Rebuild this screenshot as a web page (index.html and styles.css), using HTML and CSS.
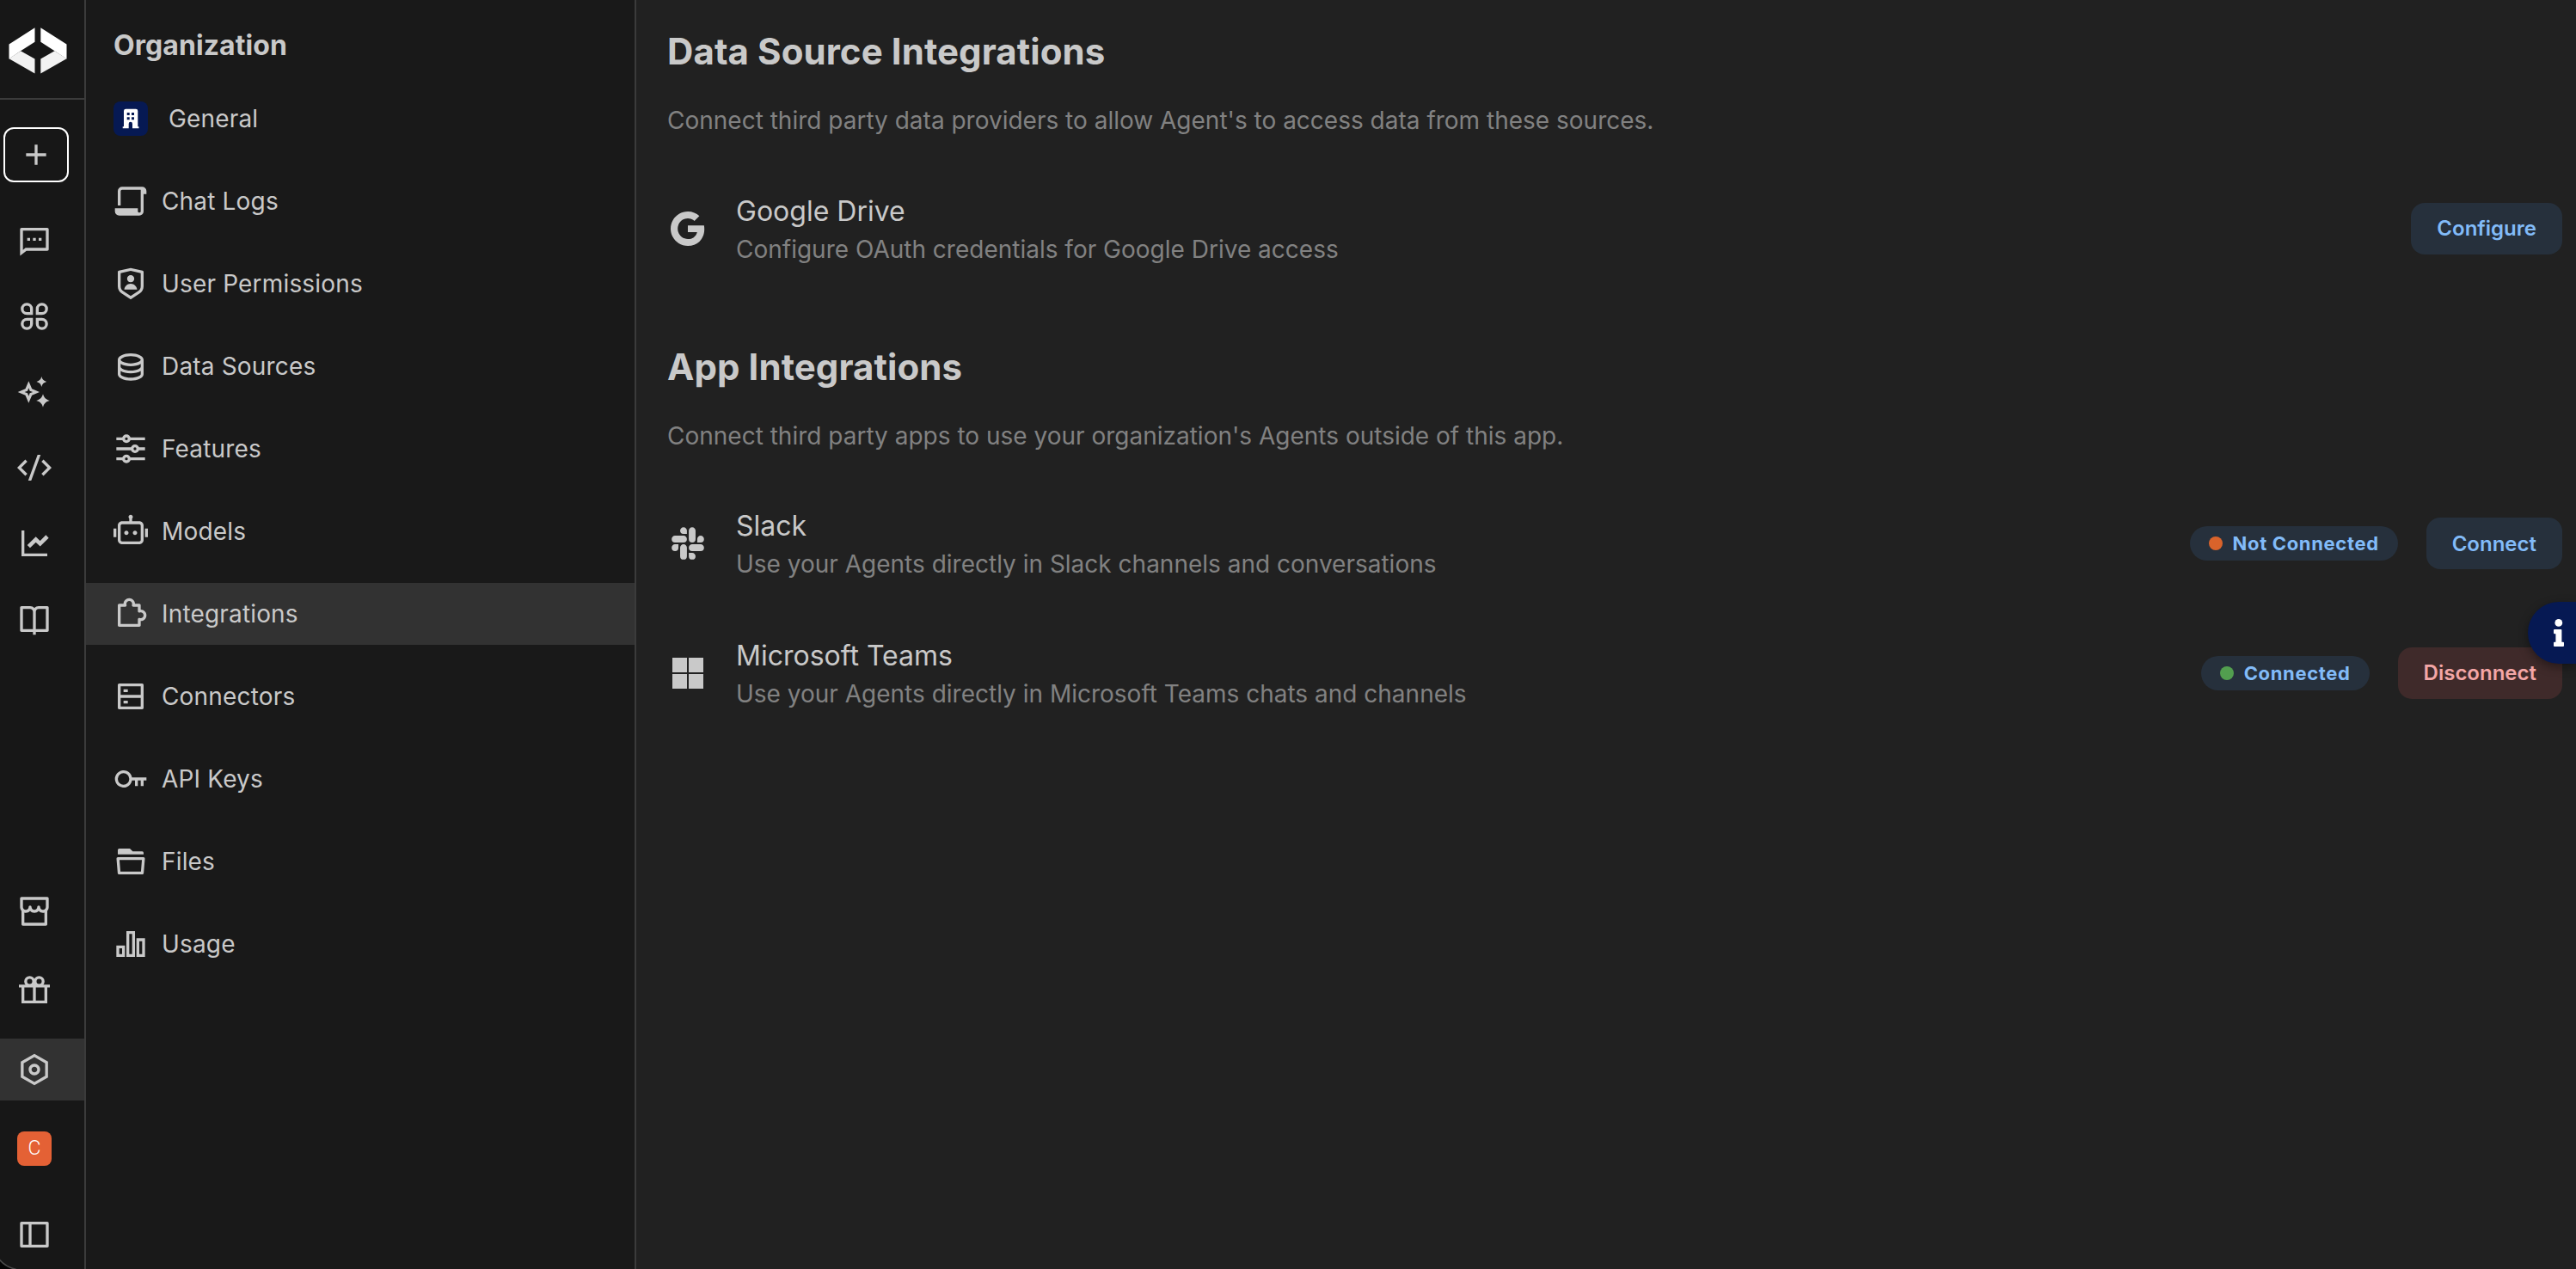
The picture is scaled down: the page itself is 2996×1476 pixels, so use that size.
FILE: index.html
```html
<!DOCTYPE html>
<html lang="en">

<head>
  <meta charset="UTF-8" />
  <meta name="viewport" content="width=device-width, initial-scale=1.0" />
  <title>Integrations</title>
  <link rel="stylesheet" href="styles.css">
</head>

<body>

  <div class="app">

    <!-- Icon rail -->
    <nav class="rail">
      <div class="rail-header">
        <svg class="logo" viewBox="0 0 68 54">
          <path fill="#fff" d="M30.5 0.3V16.8L14 27.3L0.5 36.5V19.5ZM37.3 0.3V16.8L53.5 27.3L67.5 36.5V19.5Z" />
          <path fill="#f2f2f2" d="M14 27.3L30.5 36.5V53.4L0.5 36.3ZM53.5 27.3L37.3 36.5V53.4L67.5 36.3Z" />
        </svg>
      </div>

      <button class="new-btn" aria-label="New">
        <svg viewBox="0 0 24 24"><path d="M11 11V5H13V11H19V13H13V19H11V13H5V11H11Z" /></svg>
      </button>

      <div class="rail-top">
        <a class="rail-item"><svg class="icon" viewBox="0 0 24 24"><path d="M6.45455 19L2 22.5V4C2 3.44772 2.44772 3 3 3H21C21.5523 3 22 3.44772 22 4V18C22 18.5523 21.5523 19 21 19H6.45455ZM5.76282 17H20V5H4V18.3851L5.76282 17ZM11 10H13V12H11V10ZM7 10H9V12H7V10ZM15 10H17V12H15V10Z" /></svg></a>
        <a class="rail-item"><svg class="icon" viewBox="0 0 24 24"><path fill-rule="evenodd" d="M6.75 2.5A4.25 4.25 0 0 1 11 6.75V11H6.75A4.25 4.25 0 0 1 6.75 2.5ZM9 9V6.75A2.25 2.25 0 1 0 6.75 9H9ZM6.75 13H11V17.25A4.25 4.25 0 1 1 6.75 13ZM6.75 15A2.25 2.25 0 1 0 9 17.25V15H6.75ZM17.25 2.5A4.25 4.25 0 0 1 17.25 11H13V6.75A4.25 4.25 0 0 1 17.25 2.5ZM17.25 9A2.25 2.25 0 1 0 15 6.75V9H17.25ZM13 13H17.25A4.25 4.25 0 1 1 13 17.25V13ZM15 15V17.25A2.25 2.25 0 1 0 17.25 15H15Z" /></svg></a>
        <a class="rail-item"><svg class="icon" viewBox="0 0 24 24"><path d="M17 1.2C17.5 3.2 18.4 4.2 20.5 4.8C18.4 5.4 17.5 6.4 17 8.4C16.5 6.4 15.6 5.4 13.5 4.8C15.6 4.2 16.5 3.2 17 1.2ZM18 13.4C18.7 16 20 17.3 22.7 18C20 18.7 18.7 20 18 22.6C17.3 20 16 18.7 13.3 18C16 17.3 17.3 16 18 13.4ZM8 4.4L10.3 9.7L15.6 12L10.3 14.3L8 19.6L5.7 14.3L0.4 12L5.7 9.7ZM8 9.1L7.2 11.2L5.1 12L7.2 12.8L8 14.9L8.8 12.8L10.9 12L8.8 11.2Z" fill-rule="evenodd" /></svg></a>
        <a class="rail-item"><svg class="icon" viewBox="0 0 24 24"><path d="M24 12L18.3431 17.6569L16.9289 16.2426L21.1716 12L16.9289 7.75736L18.3431 6.34315L24 12ZM2.82843 12L7.07107 16.2426L5.65685 17.6569L0 12L5.65685 6.34315L7.07107 7.75736L2.82843 12ZM9.78845 21H7.66009L14.2116 3H16.3399L9.78845 21Z" /></svg></a>
        <a class="rail-item"><svg class="icon" viewBox="0 0 24 24"><path d="M5 3V19H21V21H3V3H5Z" /><path class="stroke stroke-bold" d="M8 14.2L13 9.3L16 12.2L21 7.2" /></svg></a>
        <a class="rail-item"><svg class="icon" viewBox="0 0 24 24"><path d="M13 21V23H11V21H3C2.44772 21 2 20.5523 2 20V4C2 3.44772 2.44772 3 3 3H9C10.1947 3 11.2671 3.52375 12 4.35418C12.7329 3.52375 13.8053 3 15 3H21C21.5523 3 22 3.44772 22 4V20C22 20.5523 21.5523 21 21 21H13ZM20 19V5H15C13.8954 5 13 5.89543 13 7V19H20ZM11 19V7C11 5.89543 10.1046 5 9 5H4V19H11Z" /></svg></a>
      </div>

      <div class="rail-bottom">
        <a class="rail-item"><svg class="icon" viewBox="0 0 24 24"><path d="M21 11.6458V21C21 21.5523 20.5523 22 20 22H4C3.44772 22 3 21.5523 3 21V11.6458C2.37764 10.9407 2 10.0144 2 9V3C2 2.44772 2.44772 2 3 2H21C21.5523 2 22 2.44772 22 3V9C22 10.0144 21.6224 10.9407 21 11.6458ZM19 12.874C18.6804 12.9562 18.3453 13 18 13C16.8053 13 15.7329 12.4762 15 11.6458C14.2671 12.4762 13.1947 13 12 13C10.8053 13 9.73294 12.4762 9 11.6458C8.26706 12.4762 7.19469 13 6 13C5.6547 13 5.31962 12.9562 5 12.874V20H19V12.874ZM14 9C14 8.44772 14.4477 8 15 8C15.5523 8 16 8.44772 16 9C16 10.1046 16.8954 11 18 11C19.1046 11 20 10.1046 20 9V4H4V9C4 10.1046 4.89543 11 6 11C7.10457 11 8 10.1046 8 9C8 8.44772 8.44772 8 9 8C9.55228 8 10 8.44772 10 9C10 10.1046 10.8954 11 12 11C13.1046 11 14 10.1046 14 9Z" fill-rule="evenodd" /></svg></a>
        <a class="rail-item"><svg class="icon" viewBox="0 0 24 24"><path class="stroke" d="M1.2 8.9H22.8M4 9V20H20V9M12 7V20" /><circle class="stroke" cx="8.7" cy="5.7" r="2.8" /><circle class="stroke" cx="15.3" cy="5.7" r="2.8" /></svg></a>
        <a class="rail-item active"><svg class="icon" viewBox="0 0 24 24"><path d="M12 1L21.5 6.5V17.5L12 23L2.5 17.5V6.5L12 1ZM12 3.311L4.5 7.65311V16.3469L12 20.689L19.5 16.3469V7.65311L12 3.311ZM12 16C9.79086 16 8 14.2091 8 12C8 9.79086 9.79086 8 12 8C14.2091 8 16 9.79086 16 12C16 14.2091 14.2091 16 12 16ZM12 14C13.1046 14 14 13.1046 14 12C14 10.8954 13.1046 10 12 10C10.8954 10 10 10.8954 10 12C10 13.1046 10.8954 14 12 14Z" /></svg></a>
        <a class="rail-item"><span class="avatar">C</span></a>
        <a class="rail-item collapse"><svg class="icon" viewBox="0 0 24 24"><path d="M3 3H21C21.5523 3 22 3.44772 22 4V20C22 20.5523 21.5523 21 21 21H3C2.44772 21 2 20.5523 2 20V4C2 3.44772 2.44772 3 3 3ZM8 5H4V19H8V5ZM10 5V19H20V5H10Z" /></svg></a>
      </div>
    </nav>

    <!-- Organization menu -->
    <aside class="sidebar">
      <h2>Organization</h2>
      <ul class="menu">
        <li class="menu-item general">
          <span class="org-badge">
            <svg viewBox="0 0 40 40"><path fill="#fff" fill-rule="evenodd" d="M14.5 8.7H26A2.3 2.3 0 0 1 28.3 11V29.3H29.5V31.3H22V26A2.1 2.1 0 0 0 17.7 26V31.3H10.7V29.3H12V11A2.4 2.4 0 0 1 14.5 8.7ZM15.7 13V16H18.7V13ZM21 13V16H24V13ZM15.7 18.3V21.3H18.7V18.3ZM21 18.3V21.3H24V18.3Z" /></svg>
          </span>
          General
        </li>
        <li class="menu-item">
          <svg class="icon" viewBox="0 0 24 24"><path d="M6 2H20A3 3 0 0 1 23 5V7H21V19A3 3 0 0 1 18 22H4A3 3 0 0 1 1 19V17H17V19A1 1 0 0 0 19 19V4H6A1 1 0 0 0 5 5V15H3V5A3 3 0 0 1 6 2Z" /></svg>
          Chat Logs
        </li>
        <li class="menu-item">
          <svg class="icon" viewBox="0 0 24 24"><path d="M3.78307 2.82598L12 1L20.2169 2.82598C20.6745 2.92766 21 3.33347 21 3.80217V13.7889C21 15.795 19.9974 17.6684 18.3282 18.7812L12 23L5.6718 18.7812C4.00261 17.6684 3 15.795 3 13.7889V3.80217C3 3.33347 3.32553 2.92766 3.78307 2.82598ZM5 4.60434V13.7889C5 15.1263 5.6684 16.3752 6.7812 17.1171L12 20.5963L17.2188 17.1171C18.3316 16.3752 19 15.1263 19 13.7889V4.60434L12 3.04879L5 4.60434ZM12 11C10.6193 11 9.5 9.88071 9.5 8.5C9.5 7.11929 10.6193 6 12 6C13.3807 6 14.5 7.11929 14.5 8.5C14.5 9.88071 13.3807 11 12 11ZM7.52746 16C7.77619 13.75 9.68372 12 12 12C14.3163 12 16.2238 13.75 16.4725 16H7.52746Z" /></svg>
          User Permissions
        </li>
        <li class="menu-item">
          <svg class="icon" viewBox="0 0 24 24"><path d="M5 12.5C5 12.8134 5.46101 13.3584 6.53047 13.8931C7.91405 14.5849 9.87677 15 12 15C14.1232 15 16.0859 14.5849 17.4695 13.8931C18.539 13.3584 19 12.8134 19 12.5V10.3287C17.35 11.3482 14.8273 12 12 12C9.17273 12 6.64996 11.3482 5 10.3287V12.5ZM19 15.3287C17.35 16.3482 14.8273 17 12 17C9.17273 17 6.64996 16.3482 5 15.3287V17.5C5 17.8134 5.46101 18.3584 6.53047 18.8931C7.91405 19.5849 9.87677 20 12 20C14.1232 20 16.0859 19.5849 17.4695 18.8931C18.539 18.3584 19 17.8134 19 17.5V15.3287ZM3 17.5V7.5C3 5.01472 7.02944 3 12 3C16.9706 3 21 5.01472 21 7.5V17.5C21 19.9853 16.9706 22 12 22C7.02944 22 3 19.9853 3 17.5ZM12 10C14.1232 10 16.0859 9.58492 17.4695 8.89313C18.539 8.3584 19 7.81342 19 7.5C19 7.18658 18.539 6.6416 17.4695 6.10687C16.0859 5.41508 14.1232 5 12 5C9.87677 5 7.91405 5.41508 6.53047 6.10687C5.46101 6.6416 5 7.18658 5 7.5C5 7.81342 5.46101 8.3584 6.53047 8.89313C7.91405 9.58492 9.87677 10 12 10Z" fill-rule="evenodd" /></svg>
          Data Sources
        </li>
        <li class="menu-item">
          <svg class="icon" viewBox="0 0 24 24"><path class="stroke" d="M2 5H7M11 5H22M2 12H13M17 12H22M2 19H7M11 19H22" /><circle class="stroke" cx="9" cy="5" r="2" /><circle class="stroke" cx="15" cy="12" r="2" /><circle class="stroke" cx="9" cy="19" r="2" /></svg>
          Features
        </li>
        <li class="menu-item">
          <svg class="icon" viewBox="0 0 24 24"><path d="M13.5 2C13.5 2.44425 13.3069 2.84339 13 3.11805V5H18C19.6569 5 21 6.34315 21 8V18C21 19.6569 19.6569 21 18 21H6C4.34315 21 3 19.6569 3 18V8C3 6.34315 4.34315 5 6 5H11V3.11805C10.6931 2.84339 10.5 2.44425 10.5 2C10.5 1.17157 11.1716 0.5 12 0.5C12.8284 0.5 13.5 1.17157 13.5 2ZM6 7C5.44772 7 5 7.44772 5 8V18C5 18.5523 5.44772 19 6 19H18C18.5523 19 19 18.5523 19 18V8C19 7.44772 18.5523 7 18 7H13H11H6ZM2 10H0V16H2V10ZM22 10H24V16H22V10ZM9 14.5C9.82843 14.5 10.5 13.8284 10.5 13C10.5 12.1716 9.82843 11.5 9 11.5C8.17157 11.5 7.5 12.1716 7.5 13C7.5 13.8284 8.17157 14.5 9 14.5ZM15 14.5C15.8284 14.5 16.5 13.8284 16.5 13C16.5 12.1716 15.8284 11.5 15 11.5C14.1716 11.5 13.5 12.1716 13.5 13C13.5 13.8284 14.1716 14.5 15 14.5Z" /></svg>
          Models
        </li>
        <li class="menu-item active">
          <svg class="icon" viewBox="0 0 24 24"><path d="M7 5C7 2.79086 8.79086 1 11 1C13.2091 1 15 2.79086 15 5H18C18.5523 5 19 5.44772 19 6V9C21.2091 9 23 10.7909 23 13C23 15.2091 21.2091 17 19 17V20C19 20.5523 18.5523 21 18 21H4C3.44772 21 3 20.5523 3 20V6C3 5.44772 3.44772 5 4 5H7ZM11 3C9.89543 3 9 3.89543 9 5C9 5.23554 9.0403 5.45952 9.11355 5.66675C9.22172 5.97282 9.17461 6.31235 8.98718 6.57739C8.79974 6.84243 8.49532 7 8.17071 7H5V19H17V15.8293C17 15.5047 17.1576 15.2003 17.4226 15.0128C17.6877 14.8254 18.0272 14.7783 18.3332 14.8865C18.5405 14.9597 18.7645 15 19 15C20.1046 15 21 14.1046 21 13C21 11.8954 20.1046 11 19 11C18.7645 11 18.5405 11.0403 18.3332 11.1135C18.0272 11.2217 17.6877 11.1746 17.4226 10.9872C17.1576 10.7997 17 10.4953 17 10.1707V7H13.8293C13.5047 7 13.2003 6.84243 13.0128 6.57739C12.8254 6.31235 12.7783 5.97282 12.8865 5.66675C12.9597 5.45952 13 5.23554 13 5C13 3.89543 12.1046 3 11 3Z" /></svg>
          Integrations
        </li>
        <li class="menu-item">
          <svg class="icon" viewBox="0 0 24 24"><path d="M5 11H19V5H5V11ZM21 4V20C21 20.5523 20.5523 21 20 21H4C3.44772 21 3 20.5523 3 20V4C3 3.44772 3.44772 3 4 3H20C20.5523 3 21 3.44772 21 4ZM19 13H5V19H19V13ZM7 15H10V17H7V15ZM7 7H10V9H7V7Z" fill-rule="evenodd" /></svg>
          Connectors
        </li>
        <li class="menu-item">
          <svg class="icon" viewBox="0 0 24 24"><path d="M12.917 13A6 6 0 1 1 12.917 11H23V13H21V17H19V13H17V17H15V13H12.917ZM7 16A4 4 0 1 0 7 8A4 4 0 0 0 7 16Z" fill-rule="evenodd" /></svg>
          API Keys
        </li>
        <li class="menu-item">
          <svg class="icon" viewBox="0 0 24 24"><path d="M3.087 9H20.913A1 1 0 0 1 21.91 10.083L21.076 20.083A1 1 0 0 1 20.08 21H3.92A1 1 0 0 1 2.924 20.083L2.09 10.083A1 1 0 0 1 3.087 9ZM4.84 19H19.16L19.826 11H4.174L4.84 19ZM13.414 5H20A1 1 0 0 1 21 6V7H3V4A1 1 0 0 1 4 3H11.414L13.414 5Z" fill-rule="evenodd" /></svg>
          Files
        </li>
        <li class="menu-item">
          <svg class="icon" viewBox="0 0 24 24"><path d="M2 13H8V21H2V13ZM9 3H15V21H9V3ZM16 8H22V21H16V8ZM4 15V19H6V15H4ZM11 5V19H13V5H11ZM18 10V19H20V10H18Z" fill-rule="evenodd" /></svg>
          Usage
        </li>
      </ul>
    </aside>

    <main class="content">
      <section class="section">
        <h1>Data Source Integrations</h1>
        <p class="description">Connect third party data providers to allow Agent's to access data from these sources.</p>
        <div class="rows">
          <div class="row">
            <svg class="brand" viewBox="0 0 24 24"><path d="M3.06364 7.50914C4.70909 4.24092 8.09084 2 12 2C14.6954 2 16.959 2.99095 18.6909 4.60455L15.8227 7.47274C14.7864 6.48185 13.4681 5.97727 12 5.97727C9.39542 5.97727 7.19084 7.73637 6.40455 10.1C6.2045 10.7 6.09086 11.3409 6.09086 12C6.09086 12.6591 6.2045 13.3 6.40455 13.9C7.19084 16.2636 9.39542 18.0227 12 18.0227C13.3454 18.0227 14.4909 17.6682 15.3864 17.0682C16.4454 16.3591 17.15 15.3 17.3818 14.05H12V10.1818H21.4181C21.5364 10.8363 21.6 11.5182 21.6 12.2273C21.6 15.2727 20.5091 17.8363 18.6181 19.5773C16.9636 21.1046 14.7 22 12 22C8.09084 22 4.70909 19.7591 3.06364 16.4909C2.38638 15.1409 2 13.6136 2 12C2 10.3864 2.38638 8.85911 3.06364 7.50914Z" /></svg>
            <div class="row-text">
              <h3>Google Drive</h3>
              <p>Configure OAuth credentials for Google Drive access</p>
            </div>
            <button class="btn">Configure</button>
          </div>
        </div>
      </section>

      <section class="section">
        <h1>App Integrations</h1>
        <p class="description">Connect third party apps to use your organization's Agents outside of this app.</p>
        <div class="rows">
          <div class="row">
            <svg class="brand" viewBox="0 0 24 24"><path d="M6.527 14.514A1.973 1.973 0 0 1 4.56 16.48a1.973 1.973 0 0 1-1.967-1.967c0-1.083.884-1.968 1.967-1.968h1.967v1.968Zm.992 0c0-1.083.884-1.968 1.967-1.968 1.083 0 1.968.885 1.968 1.968v4.926a1.973 1.973 0 0 1-1.968 1.967 1.973 1.973 0 0 1-1.967-1.967v-4.926Zm1.967-7.987A1.973 1.973 0 0 1 7.519 4.56c0-1.083.884-1.967 1.967-1.967 1.083 0 1.968.884 1.968 1.967v1.967H9.486Zm0 .992c1.083 0 1.968.884 1.968 1.967a1.973 1.973 0 0 1-1.968 1.968H4.56a1.973 1.973 0 0 1-1.967-1.968c0-1.083.884-1.967 1.967-1.967h4.926Zm7.987 1.967c0-1.083.884-1.967 1.967-1.967 1.083 0 1.967.884 1.967 1.967a1.973 1.973 0 0 1-1.967 1.968h-1.967V9.486Zm-.992 0a1.973 1.973 0 0 1-1.967 1.968 1.973 1.973 0 0 1-1.968-1.968V4.56c0-1.083.885-1.967 1.968-1.967s1.967.884 1.967 1.967v4.926Zm-1.967 7.987c1.083 0 1.967.884 1.967 1.967a1.973 1.973 0 0 1-1.967 1.967 1.973 1.973 0 0 1-1.968-1.967v-1.967h1.968Zm0-.992a1.973 1.973 0 0 1-1.968-1.967c0-1.083.885-1.968 1.968-1.968h4.926c1.083 0 1.967.885 1.967 1.968a1.973 1.973 0 0 1-1.967 1.967h-4.926Z" /></svg>
            <div class="row-text">
              <h3>Slack</h3>
              <p>Use your Agents directly in Slack channels and conversations</p>
            </div>
            <span class="chip"><span class="dot dot-off"></span>Not Connected</span>
            <button class="btn">Connect</button>
          </div>
          <div class="row">
            <svg class="brand" viewBox="0 0 24 24"><path d="M3 3H11.5V11.5H3ZM12.5 3H21V11.5H12.5ZM3 12.5H11.5V21H3ZM12.5 12.5H21V21H12.5Z" /></svg>
            <div class="row-text">
              <h3>Microsoft Teams</h3>
              <p>Use your Agents directly in Microsoft Teams chats and channels</p>
            </div>
            <span class="chip"><span class="dot dot-on"></span>Connected</span>
            <button class="btn btn-danger">Disconnect</button>
          </div>
        </div>
      </section>
    </main>

  </div>

  <!-- Floating help tab on the right edge -->
  <button class="help-tab" aria-label="Help">
    <svg viewBox="0 0 12 32"><circle cx="5.8" cy="4.4" r="4.4" /><path d="M1 12H8.4A1 1 0 0 1 9.4 13V26.7H11A1 1 0 0 1 12 27.7V31A1 1 0 0 1 11 32H1A1 1 0 0 1 0 31V27.7A1 1 0 0 1 1 26.7H2.4V17.2H1A1 1 0 0 1 0 16.2V13A1 1 0 0 1 1 12Z" /></svg>
  </button>

  <!-- Rounded window corner -->
  <svg class="corner" viewBox="0 0 20 12"><path fill="#050505" d="M0 1Q6 9 19 12H0Z" /><path fill="none" stroke="#4a4a4a" stroke-width="1.6" d="M-1 0.5Q6 9.5 19 12.5" /></svg>

</body>

</html>
```

FILE: styles.css
```css
:root {
  --rail-bg: #171717;
  --sidebar-bg: #191919;
  --content-bg: #212121;
  --active-bg: #323232;
  --border-color: #3b3b3b;
  --text-color: #c9c9c9;
  --muted-color: #818181;
  --blue-bg: #26303c;
  --blue-text: #82bbf8;
  --brand-blue: #061953;
}

* {
  box-sizing: border-box;
}

body {
  margin: 0;
  font-family: Inter, "Liberation Sans", sans-serif;
  font-size: 28px;
  background-color: var(--content-bg);
  color: var(--text-color);
  overflow: hidden;
}

h1,
h2,
h3,
p,
ul {
  margin: 0;
  padding: 0;
}

button {
  font-family: inherit;
  border: none;
  cursor: pointer;
}

svg {
  display: block;
  fill: currentColor;
}

.app {
  display: flex;
  height: 100vh;
}

.icon {
  width: 40px;
  height: 40px;
  flex-shrink: 0;
}

.stroke {
  fill: none;
  stroke: currentColor;
  stroke-width: 2;
}

.stroke-bold {
  stroke-width: 2.8;
}

/* icon rail */
.rail {
  width: 100px;
  flex-shrink: 0;
  display: flex;
  flex-direction: column;
  background-color: var(--rail-bg);
  border-right: 2px solid var(--border-color);
  padding-bottom: 4px;
}

.rail-header {
  height: 116px;
  padding: 32px 0 0 10px;
  border-bottom: 2px solid var(--border-color);
}

.logo {
  width: 68px;
  height: 54px;
}

.new-btn {
  width: 76px;
  height: 64px;
  margin: 32px 0 32px 4px;
  display: flex;
  align-items: center;
  justify-content: center;
  background: none;
  color: var(--text-color);
  border: 2px solid #fff;
  border-radius: 12px;
}

.new-btn svg {
  width: 40px;
  height: 40px;
}

.rail-top {
  display: flex;
  flex-direction: column;
  gap: 16px;
}

.rail-bottom {
  display: flex;
  flex-direction: column;
  gap: 20px;
  margin-top: auto;
}

.rail-item {
  height: 72px;
  padding-left: 20px;
  display: flex;
  align-items: center;
}

.rail-item.active,
.menu-item.active {
  background-color: var(--active-bg);
}

.rail-item.collapse {
  margin-top: 8px;
}

.avatar {
  width: 40px;
  height: 40px;
  border-radius: 8px;
  background-color: #e46135;
  color: #fff;
  font-family: Roboto, sans-serif;
  font-size: 23px;
  font-weight: 300;
  line-height: 40px;
  text-align: center;
}

/* organization menu */
.sidebar {
  width: 640px;
  flex-shrink: 0;
  padding-top: 33px;
  background-color: var(--sidebar-bg);
  border-right: 2px solid var(--border-color);
}

.sidebar h2 {
  height: 40px;
  padding-left: 32px;
  font-size: 32px;
  font-weight: 700;
  line-height: 40px;
  letter-spacing: 0.002em;
}

.menu {
  list-style: none;
  display: flex;
  flex-direction: column;
  gap: 24px;
  margin-top: 29px;
}

.menu-item {
  height: 72px;
  padding-left: 32px;
  display: flex;
  align-items: center;
  gap: 16px;
  letter-spacing: 0.006em;
}

.menu-item.general {
  gap: 24px;
}

.org-badge {
  width: 40px;
  height: 40px;
  border-radius: 8px;
  background-color: var(--brand-blue);
}

/* main content */
.content {
  flex: 1;
  padding: 34px 16px 0 36px;
}

.section + .section {
  margin-top: 91px;
}

h1 {
  font-size: 42px;
  font-weight: 700;
  line-height: 52px;
  letter-spacing: 0.002em;
}

.description {
  margin-top: 34px;
  line-height: 40px;
  color: var(--muted-color);
}

.rows {
  display: flex;
  flex-direction: column;
  gap: 62.6px;
  margin-top: 61.6px;
}

.row {
  height: 88px;
  display: flex;
  align-items: center;
}

.brand {
  width: 48px;
  height: 48px;
  margin-right: 32px;
}

.row-text {
  flex: 1;
}

.row-text h3 {
  font-size: 32px;
  font-weight: 400;
  line-height: 48px;
}

.row-text p {
  line-height: 40px;
  color: var(--muted-color);
}

.btn {
  height: 60px;
  padding: 0 30px;
  border-radius: 16px;
  background-color: var(--blue-bg);
  color: var(--blue-text);
  font-size: 24px;
  font-weight: 600;
}

.btn-danger {
  background-color: #3f2a2a;
  color: #f3a6a6;
}

.chip {
  height: 40px;
  margin-right: 33px;
  padding: 0 22px;
  display: flex;
  align-items: center;
  gap: 12px;
  border-radius: 20px;
  background-color: var(--blue-bg);
  color: var(--blue-text);
  font-size: 22px;
  font-weight: 700;
  letter-spacing: 0.03em;
}

.dot {
  width: 16px;
  height: 16px;
  border-radius: 50%;
}

.dot-off {
  background-color: #d9632b;
}

.dot-on {
  background-color: #529e4f;
}

.help-tab {
  position: absolute;
  top: 700px;
  right: 0;
  width: 56px;
  height: 72px;
  padding: 0 0 0 30px;
  display: flex;
  align-items: center;
  border-radius: 36px 0 0 36px;
  background-color: var(--brand-blue);
  color: #fff;
  box-shadow: 0 4px 12px rgba(0, 0, 0, 0.4);
}

.help-tab svg {
  width: 12px;
  height: 32px;
}

.corner {
  position: absolute;
  left: 0;
  bottom: 0;
  width: 20px;
  height: 12px;
}
```
